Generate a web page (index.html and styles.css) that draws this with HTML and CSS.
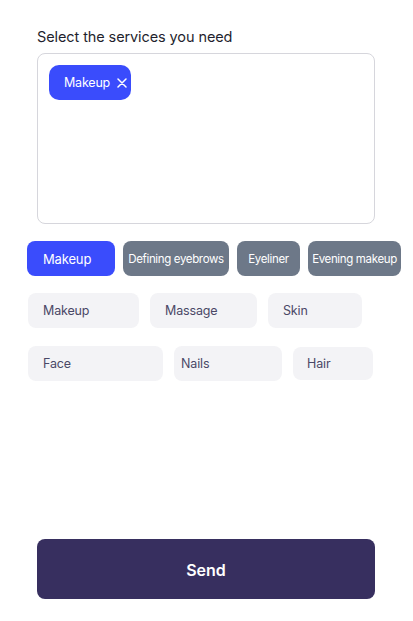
FILE: index.html
```html
<!DOCTYPE html>
<html>
<head>
<meta charset="utf-8">
<link rel="stylesheet" href="styles.css">
</head>
<body>
<div class="page">
  <div class="field">
    <div class="label">Select the services you need</div>
    <div class="box">
      <span class="selected">Makeup <svg class="x" width="10" height="10" viewBox="0 0 10 10"><path d="M1 1L9 9M9 1L1 9" stroke="#fff" stroke-width="1.5" stroke-linecap="round"/></svg></span>
    </div>
  </div>
  <div class="row r1">
    <span class="chip blue w88 pl16">Makeup</span>
    <span class="chip gray w106 c">Defining eyebrows</span>
    <span class="chip gray w63 c">Eyeliner</span>
    <span class="chip gray w93 c">Evening makeup</span>
  </div>
  <div class="row r2">
    <span class="chip light w111 pl15">Makeup</span>
    <span class="chip light w107 pl15">Massage</span>
    <span class="chip light w94 pl15">Skin</span>
  </div>
  <div class="row r3">
    <span class="chip light w135 pl15">Face</span>
    <span class="chip light w108 pl7">Nails</span>
    <span class="chip light w80 pl14 short">Hair</span>
  </div>
  <div class="spacer"></div>
  <button class="send">Send</button>
</div>
</body>
</html>
```

FILE: styles.css
```css
* { box-sizing: border-box; }
html, body { margin: 0; padding: 0; background: #fff; }
body { font-family: Inter, "Noto Sans", sans-serif; width: 413px; height: 621px; overflow: hidden; }
.page { display: flex; flex-direction: column; height: 621px; padding: 28px 0 0 0; }
.field { padding: 0 38px 0 37px; }
.label { font-size: 14.5px; color: #1f1f2e; line-height: 18px; letter-spacing: -0.1px; }
.box { margin-top: 7px; height: 171px; border: 1px solid #d6d6dc; border-radius: 8px; padding: 11px 11px; }
.selected { display: inline-flex; align-items: center; height: 35px; width: 82px; padding: 0 0 0 15px; background: #3a4cfc; color: #fff; border-radius: 10px; font-size: 12.5px; letter-spacing: -0.2px; gap: 7px; }
.x { flex: none; }
.row { display: flex; }
.r1 { margin-top: 17px; padding-left: 27px; gap: 8px; }
.r2 { margin-top: 17px; padding-left: 28px; gap: 11px; }
.r3 { margin-top: 18px; padding-left: 28px; gap: 11px; }
.chip { display: flex; align-items: center; height: 35px; border-radius: 8px; font-size: 12.5px; white-space: nowrap; flex: none; letter-spacing: -0.15px; }
.blue { background: #3a4cfc; color: #fff; font-size: 13px; }
.gray { background: #6d7888; color: #fff; font-size: 11.5px; letter-spacing: -0.35px; border-radius: 8px; }
.light { background: #f3f3f6; color: #4a4866; }
.c { justify-content: center; }
.short { height: 33px; margin-top: 1px; }
.w88 { width: 88px; } .w106 { width: 106px; } .w63 { width: 63px; } .w93 { width: 93px; }
.w111 { width: 111px; } .w107 { width: 107px; } .w94 { width: 94px; }
.w135 { width: 135px; } .w108 { width: 108px; } .w80 { width: 80px; }
.pl16 { padding-left: 16px; } .pl15 { padding-left: 15px; } .pl14 { padding-left: 14px; } .pl7 { padding-left: 7px; }
.spacer { flex: 1; }
.send { margin: 0 38px 22px 37px; height: 60px; border: none; border-radius: 8px; background: #372f5f; color: #fff; font-family: Inter, "Noto Sans", sans-serif; font-size: 16px; font-weight: 600; padding-top: 2px; }
```
